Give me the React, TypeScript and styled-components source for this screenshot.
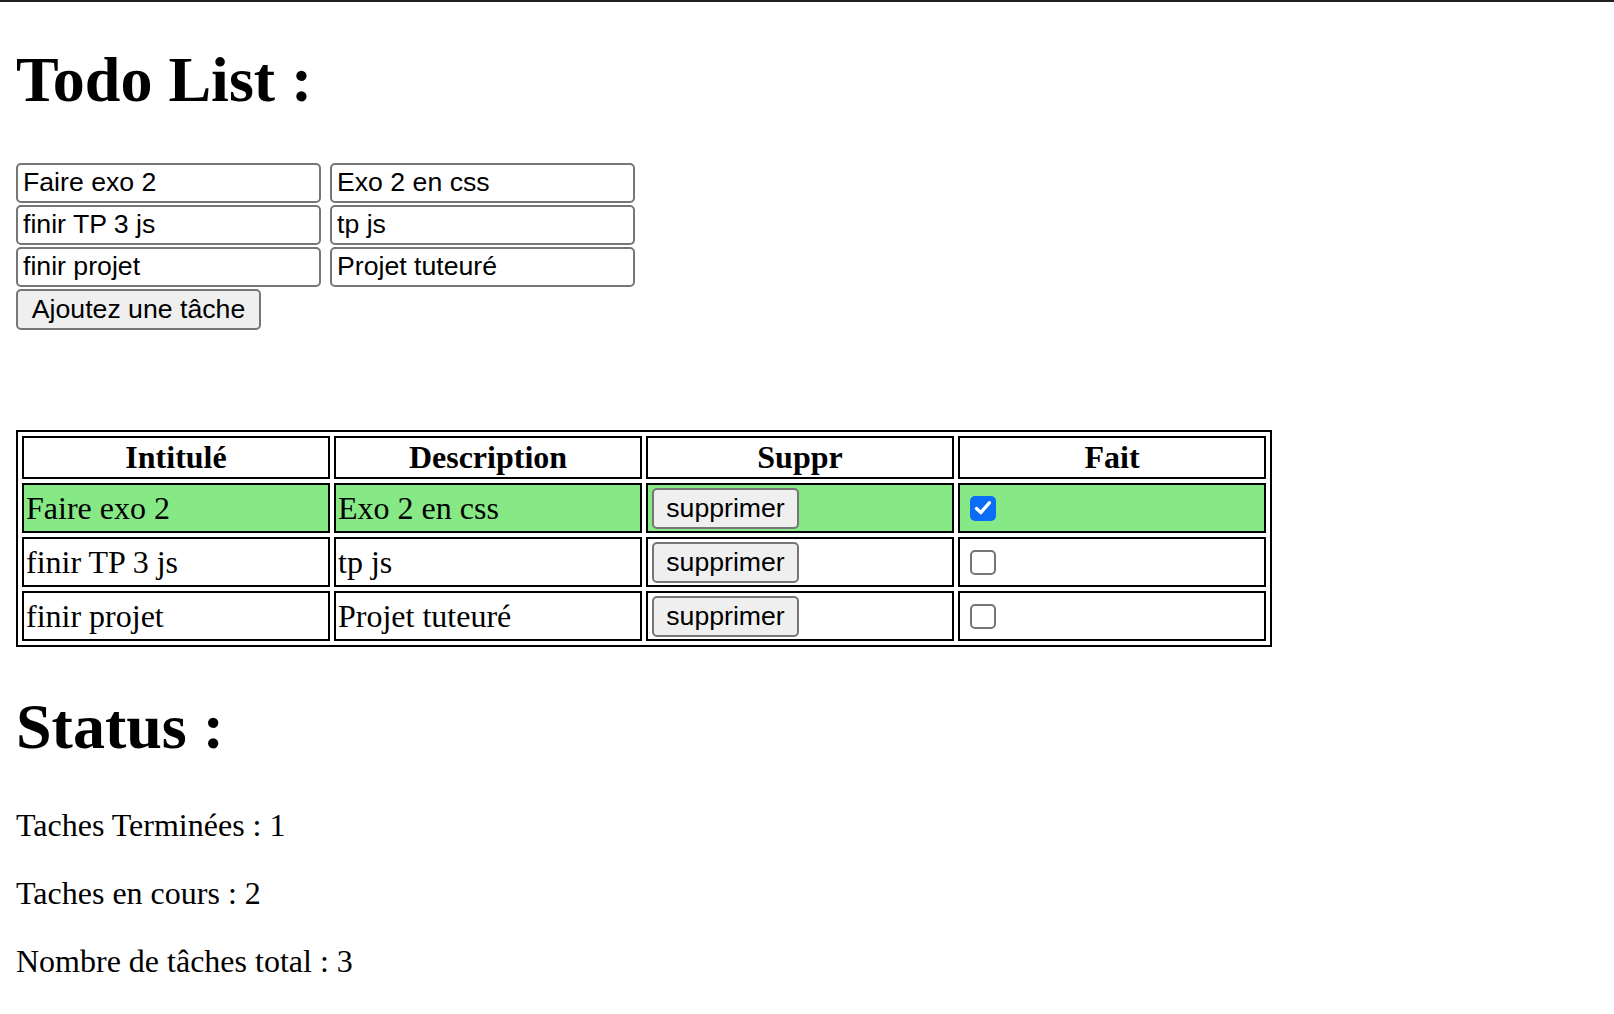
import React, { useState } from "react";
import styled, { createGlobalStyle } from "styled-components";

const GlobalStyle = createGlobalStyle`
  html, body {
    margin: 0;
    padding: 0;
    background: #ffffff;
  }
  body {
    font-family: "Liberation Serif", "Times New Roman", serif;
    font-size: 32px;
    color: #000000;
  }
`;

const TopLine = styled.div`
  height: 2px;
  background: #222222;
`;

const Page = styled.main`
  padding: 0 16px;
`;

const Heading = styled.h1<{ $lead?: boolean }>`
  font-family: "Liberation Serif", "Times New Roman", serif;
  font-size: 64px;
  font-weight: bold;
  line-height: 73.6px;
  margin: ${(p) => (p.$lead ? "40.9px" : "42.9px")} 0 42.9px;
`;

const Form = styled.form`
  display: grid;
  grid-template-columns: 305px 305px;
  grid-auto-rows: 40px;
  column-gap: 9px;
  row-gap: 2px;
  margin-top: 46.2px;
`;

const TextInput = styled.input`
  box-sizing: border-box;
  width: 100%;
  height: 40px;
  margin: 0;
  padding: 2px 5px;
  border: 2px solid #767676;
  border-radius: 5px;
  background: #ffffff;
  font-family: "Liberation Sans", Arial, sans-serif;
  font-size: 26.67px;
  color: #000000;
  outline: none;
`;

const GrayButton = styled.button<{ $w: number; $h: number }>`
  box-sizing: border-box;
  width: ${(p) => p.$w}px;
  height: ${(p) => p.$h}px;
  margin: 0;
  padding: 2px 12px;
  border: 2px solid #767676;
  border-radius: 5px;
  background: #efefef;
  font-family: "Liberation Sans", Arial, sans-serif;
  font-size: 26.67px;
  color: #000000;
  text-align: center;
  cursor: pointer;
`;

const AddButton = styled(GrayButton)`
  grid-column: 1;
  justify-self: start;
`;

const Table = styled.table`
  width: 1256px;
  margin-top: 101.5px;
  border: 2px solid #000000;
  border-spacing: 4px;
  table-layout: fixed;
  font-family: "Liberation Serif", "Times New Roman", serif;
  font-size: 32px;
`;

const HeadCell = styled.th`
  border: 2px solid #000000;
  padding: 2px;
  font-weight: bold;
  text-align: center;
  line-height: 35px;
`;

const Cell = styled.td<{ $done: boolean }>`
  border: 2px solid #000000;
  padding: 2px;
  text-align: left;
  vertical-align: middle;
  line-height: 36px;
  background: ${(p) => (p.$done ? "#86e986" : "#ffffff")};
  white-space: nowrap;
`;

const RowButton = styled(GrayButton)`
  display: block;
  margin: 1px 0 0 2px;
`;

const Box = styled.span<{ $checked: boolean }>`
  box-sizing: border-box;
  display: flex;
  align-items: center;
  justify-content: center;
  width: 26px;
  height: 25px;
  margin-left: 8px;
  border-radius: 5px;
  border: ${(p) => (p.$checked ? "none" : "2.5px solid #757575")};
  background: ${(p) => (p.$checked ? "#0b6cf5" : "#ffffff")};
  cursor: pointer;
`;

const StatLine = styled.p`
  margin: 32px 0;
  font-size: 32px;
  line-height: 36px;
`;

type Task = { title: string; desc: string; done: boolean };

const initial: Task[] = [
  { title: "Faire exo 2", desc: "Exo 2 en css", done: true },
  { title: "finir TP 3 js", desc: "tp js", done: false },
  { title: "finir projet", desc: "Projet tuteuré", done: false },
];

function Check({ checked, onToggle }: { checked: boolean; onToggle: () => void }) {
  return (
    <Box $checked={checked} role="checkbox" aria-checked={checked} onClick={onToggle}>
      {checked && (
        <svg width="18" height="16" viewBox="0 0 18 16">
          <path
            d="M2.5 8.6 L6.8 12.6 L15.3 2.8"
            fill="none"
            stroke="#ffffff"
            strokeWidth="3.4"
            strokeLinecap="round"
            strokeLinejoin="round"
          />
        </svg>
      )}
    </Box>
  );
}

export default function App() {
  const [tasks, setTasks] = useState<Task[]>(initial);

  const toggle = (i: number) =>
    setTasks((t) => t.map((x, j) => (j === i ? { ...x, done: !x.done } : x)));
  const remove = (i: number) => setTasks((t) => t.filter((_, j) => j !== i));

  const doneCount = tasks.filter((t) => t.done).length;

  return (
    <>
      <GlobalStyle />
      <TopLine />
      <Page>
        <Heading $lead>Todo List :</Heading>
        <Form onSubmit={(e) => e.preventDefault()}>
          <TextInput defaultValue="Faire exo 2" />
          <TextInput defaultValue="Exo 2 en css" />
          <TextInput defaultValue="finir TP 3 js" />
          <TextInput defaultValue="tp js" />
          <TextInput defaultValue="finir projet" />
          <TextInput defaultValue="Projet tuteuré" />
          <AddButton type="submit" $w={245} $h={41}>
            Ajoutez une tâche
          </AddButton>
        </Form>
        <Table>
          <thead>
            <tr>
              <HeadCell>Intitulé</HeadCell>
              <HeadCell>Description</HeadCell>
              <HeadCell>Suppr</HeadCell>
              <HeadCell>Fait</HeadCell>
            </tr>
          </thead>
          <tbody>
            {tasks.map((t, i) => (
              <tr key={t.title}>
                <Cell $done={t.done}>{t.title}</Cell>
                <Cell $done={t.done}>{t.desc}</Cell>
                <Cell $done={t.done}>
                  <RowButton type="button" $w={147} $h={41} onClick={() => remove(i)}>
                    supprimer
                  </RowButton>
                </Cell>
                <Cell $done={t.done}>
                  <Check checked={t.done} onToggle={() => toggle(i)} />
                </Cell>
              </tr>
            ))}
          </tbody>
        </Table>
        <Heading>Status :</Heading>
        <StatLine>Taches Terminées : {doneCount}</StatLine>
        <StatLine>Taches en cours : {tasks.length - doneCount}</StatLine>
        <StatLine>Nombre de tâches total : {tasks.length}</StatLine>
      </Page>
    </>
  );
}
